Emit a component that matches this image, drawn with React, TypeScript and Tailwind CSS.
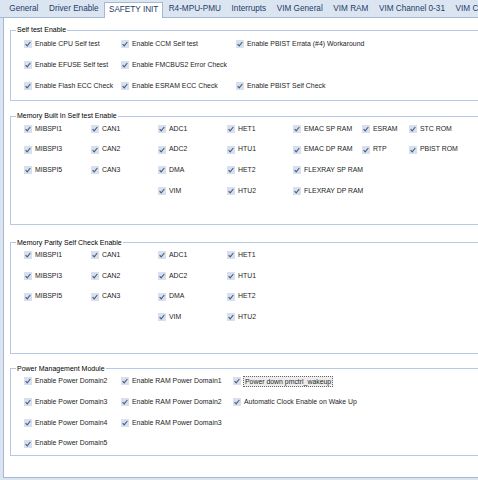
import React from 'react';

type Cell = string | null;

const tabs = [
  'General',
  'Driver Enable',
  'SAFETY INIT',
  'R4-MPU-PMU',
  'Interrupts',
  'VIM General',
  'VIM RAM',
  'VIM Channel 0-31',
  'VIM Channel 32-63',
];

function Check({ label, focused }: { label: string; focused?: boolean }) {
  return (
    <div className="flex items-center h-full">
      <span className="w-[8px] h-[8px] bg-[#d7e0ec] flex items-center justify-center shrink-0">
        <svg width="8" height="8" viewBox="0 0 8 8">
          <path d="M1.6 4.1 L3.2 5.8 L6.3 2" fill="none" stroke="#475d86" strokeWidth="1.15" />
        </svg>
      </span>
      <span
        className={
          focused
            ? 'ml-[2px] px-[1px] border border-dotted border-[#666] bg-[#ededed] leading-[9px] whitespace-nowrap'
            : 'ml-[3px] whitespace-nowrap'
        }
      >
        {label}
      </span>
    </div>
  );
}

function Group({
  title,
  cols,
  rows,
  className,
  gridClass = '',
}: {
  title: string;
  cols: string;
  rows: Cell[][];
  className: string;
  gridClass?: string;
}) {
  return (
    <fieldset className={`ml-[6px] w-[520px] border border-[#b7c9e2] ${className}`}>
      <legend className="ml-[5px] px-[1px] text-[7px] leading-[8px] text-black">{title}</legend>
      <div className={`grid ${cols} pl-[13px] ${gridClass}`}>
        {rows.flat().map((c, i) => (
          <div key={i} className="h-[20.8px]">
            {c && <Check label={c} focused={c === 'Power down pmctrl_wakeup'} />}
          </div>
        ))}
      </div>
    </fieldset>
  );
}

export default function App() {
  return (
    <div
      className="w-[478px] h-[480px] overflow-hidden bg-[#dbe5f1] text-[#1d1d1d] text-[6.9px]"
      style={{ fontFamily: '"Liberation Sans", Arial, sans-serif' }}
    >
      {/* tab strip */}
      <div className="h-[18px] flex items-end pl-[4px] border-b border-[#a6b9d3] w-[560px]">
        {tabs.map((t) => (
          <div
            key={t}
            className={
              t === 'SAFETY INIT'
                ? 'h-[16px] -mb-px px-[4px] bg-white border border-b-0 border-[#a6b9d3] text-[8.2px] text-[#1f3c68] flex items-center whitespace-nowrap'
                : 'h-[16px] px-[5.3px] text-[8.2px] text-[#1f3c68] flex items-center whitespace-nowrap'
            }
          >
            {t}
          </div>
        ))}
      </div>

      {/* page */}
      <div className="ml-[3px] w-[540px] h-[461px] -mt-px bg-white border border-[#a6b9d3] pt-[8px]">
        <Group
          title="Self test Enable"
          cols="grid-cols-[97px_115px_200px]"
          className="pb-[4px]"
          rows={[
            ['Enable CPU Self test', 'Enable CCM Self test', 'Enable PBIST Errata (#4) Workaround'],
            ['Enable EFUSE Self test', 'Enable FMCBUS2 Error Check', null],
            ['Enable Flash ECC Check', 'Enable ESRAM ECC Check', 'Enable PBIST Self Check'],
          ]}
        />
        <Group
          title="Memory Built In Self test Enable"
          cols="grid-cols-[67px_67px_69px_66px_69px_47px_80px]"
          gridClass="-mt-[2px]"
          className="mt-[11px] pb-[22px]"
          rows={[
            ['MIBSPI1', 'CAN1', 'ADC1', 'HET1', 'EMAC SP RAM', 'ESRAM', 'STC ROM'],
            ['MIBSPI3', 'CAN2', 'ADC2', 'HTU1', 'EMAC DP RAM', 'RTP', 'PBIST ROM'],
            ['MIBSPI5', 'CAN3', 'DMA', 'HET2', 'FLEXRAY SP RAM', null, null],
            [null, null, 'VIM', 'HTU2', 'FLEXRAY DP RAM', null, null],
          ]}
        />
        <Group
          title="Memory Parity Self Check Enable"
          cols="grid-cols-[67px_67px_69px_66px]"
          gridClass="-mt-[2px]"
          className="mt-[14px] pb-[25px]"
          rows={[
            ['MIBSPI1', 'CAN1', 'ADC1', 'HET1'],
            ['MIBSPI3', 'CAN2', 'ADC2', 'HTU1'],
            ['MIBSPI5', 'CAN3', 'DMA', 'HET2'],
            [null, null, 'VIM', 'HTU2'],
          ]}
        />
        <Group
          title="Power Management Module"
          cols="grid-cols-[97px_112px_200px]"
          gridClass="-mt-[2px]"
          className="mt-[11px] pb-[1px]"
          rows={[
            ['Enable Power Domain2', 'Enable RAM Power Domain1', 'Power down pmctrl_wakeup'],
            ['Enable Power Domain3', 'Enable RAM Power Domain2', 'Automatic Clock Enable on Wake Up'],
            ['Enable Power Domain4', 'Enable RAM Power Domain3', null],
            ['Enable Power Domain5', null, null],
          ]}
        />
      </div>
    </div>
  );
}
